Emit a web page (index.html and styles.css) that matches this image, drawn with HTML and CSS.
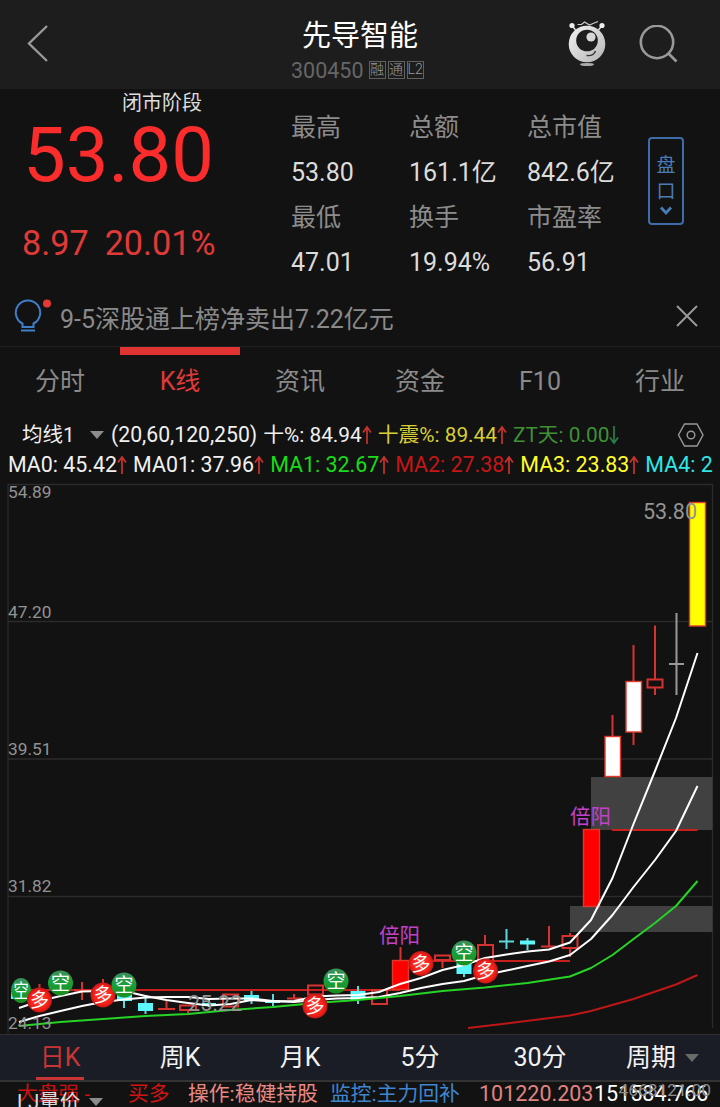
FILE: index.html
```
<!DOCTYPE html>
<html lang="zh-CN">
<head>
    <meta charset="UTF-8">
    <meta name="viewport" content="width=device-width, initial-scale=1.0">
    <title>先导智能 300450</title>
    <link rel="stylesheet" href="styles.css">
</head>
<body>
<header class="header">
    <svg class="back" width="24" height="40" viewBox="0 0 24 40">
        <path d="M21 3 3 20.500 21 38"/>
    </svg>
    <div class="stock">
        <h1>先导智能</h1>
        <div class="code">300450<span class="tag">融</span><span class="tag">通</span><span class="tag">L2</span></div>
    </div>
    <div class="tools">
        <!--机器人助手-->
        <svg class="robot" width="40" height="48" viewBox="0 0 40 48">
            <defs>
                <linearGradient id="robot-fill" x1="0" y1="0" x2="1" y2="1">
                    <stop offset="0" stop-color="#f4f4f4"/>
                    <stop offset="1" stop-color="#b4b4b4"/>
                </linearGradient>
            </defs>
            <path d="M5 5.500 8.500 10M35 5.500 31.500 10" stroke="#ddd" stroke-width="1.500"/>
            <circle cx="5" cy="5.500" r="2.600" fill="#eee"/>
            <circle cx="35" cy="5.500" r="2.600" fill="#eee"/>
            <path d="M10.500 4.500h4l3-2.500 5 3 3.500-1.500 5-2" fill="none" stroke="#ccc" stroke-width="1.200"/>
            <circle cx="20" cy="24" r="18.300" fill="url(#robot-fill)"/>
            <circle cx="20" cy="20.500" r="10.800" fill="#1d1d1d"/>
            <circle cx="24" cy="17" r="4.600" fill="#d6d6d6"/>
            <path d="M19.500 35.500q7 1 9-4.500" fill="none" stroke="#333" stroke-width="1.400"/>
            <ellipse cx="20" cy="44.500" rx="7" ry="1.600" fill="#aaa"/>
        </svg>
        <svg class="search" width="40" height="40" viewBox="0 0 40 40">
            <circle cx="18" cy="17" r="16.200"/>
            <path d="m29.500 28.500 8 8"/>
        </svg>
    </div>
</header>

<section class="quote">
    <div class="price-box">
        <div class="stage">闭市阶段</div>
        <div class="price">53.80</div>
        <div class="change"><span>8.97</span><span>20.01%</span></div>
    </div>
    <div class="detail">
        <span class="label">最高</span><span class="label">总额</span><span class="label">总市值</span>
        <span>53.80</span><span>161.1亿</span><span>842.6亿</span>
        <span class="label">最低</span><span class="label">换手</span><span class="label">市盈率</span>
        <span>47.01</span><span>19.94%</span><span>56.91</span>
    </div>
    <div class="handicap">
        <span>盘</span><span>口</span>
        <svg width="14" height="10" viewBox="0 0 14 10"><path d="m2 1.500 5 5.500 5-5.500"/></svg>
    </div>
</section>

<section class="news">
    <svg class="bulb" width="38" height="36" viewBox="0 0 38 36">
        <path d="M8.500 29v-3.500A12.200 12.200 0 1 1 19.500 25.500V29zM7 32.500h14"/>
        <circle cx="33" cy="5.500" r="4"/>
    </svg>
    <span class="news-text">9-5深股通上榜净卖出7.22亿元</span>
    <svg class="close" width="22" height="22" viewBox="0 0 22 22"><path d="m1 1 20 20M21 1 1 21"/></svg>
</section>

<nav class="tabs">
    <span>分时</span><span class="active">K线</span><span>资讯</span><span>资金</span><span>F10</span><span>行业</span>
</nav>

<section class="index">
    <div class="index-row">
        <span class="name">均线1</span><i class="down"></i>
        <span class="params">(20,60,120,250)</span>
        <span class="item">十%: 84.94<svg class="arrow"><use href="#arrow-up"/></svg></span>
        <span class="item dim-yellow">十震%: 89.44<svg class="arrow"><use href="#arrow-up"/></svg></span>
        <span class="item dim-green">ZT天: 0.00<svg class="arrow"><use href="#arrow-down"/></svg></span>
        <svg class="setting" width="28" height="24" viewBox="0 0 28 24">
            <path d="M7.500 1h12.500l6 11-6 11H7.500l-6-11z"/>
            <circle cx="14" cy="12" r="3.800"/>
        </svg>
    </div>
    <div class="index-row ma-row">
        <span class="item">MA0: 45.42<svg class="arrow"><use href="#arrow-up"/></svg></span>
        <span class="item">MA01: 37.96<svg class="arrow"><use href="#arrow-up"/></svg></span>
        <span class="item green">MA1: 32.67<svg class="arrow"><use href="#arrow-up"/></svg></span>
        <span class="item red">MA2: 27.38<svg class="arrow"><use href="#arrow-up"/></svg></span>
        <span class="item yellow">MA3: 23.83<svg class="arrow"><use href="#arrow-up"/></svg></span>
        <span class="item cyan">MA4: 2</span>
    </div>
</section>

<!--K线图，坐标原点在页面 y=480 处-->
<svg class="chart" width="720" height="554" viewBox="0 480 720 554">
    <defs>
        <symbol id="arrow-up" viewBox="0 0 10 20">
            <path d="M5 19V2M1 7.500 5 2l4 5.500" fill="none" stroke="#c8322e" stroke-width="1.700"/>
        </symbol>
        <symbol id="arrow-down" viewBox="0 0 10 20">
            <path d="M5 1v17M1 12.500 5 18l4-5.500" fill="none" stroke="#27804a" stroke-width="1.700"/>
        </symbol>
        <radialGradient id="ball-red" cx=".5" cy=".5" r=".5">
            <stop offset="0" stop-color="#ff4a3c"/>
            <stop offset=".8" stop-color="#f01c18"/>
            <stop offset="1" stop-color="#b81814"/>
        </radialGradient>
        <linearGradient id="ball-green" x1="0" y1="0" x2="0" y2="1">
            <stop offset="0" stop-color="#3c8f5c"/>
            <stop offset=".5" stop-color="#17a03a"/>
            <stop offset="1" stop-color="#1c8c1c"/>
        </linearGradient>
        <g id="long">
            <circle r="12.500" fill="url(#ball-red)"/>
            <text class="ball-text" y="7">多</text>
        </g>
        <g id="short">
            <circle r="12.500" fill="url(#ball-green)"/>
            <text class="ball-text" y="7">空</text>
        </g>
    </defs>

    <g class="grid">
        <path d="M8 1033V484.500H712.500V1028M8 621.500H712M8 759H712M8 896.500H712"/>
    </g>
    <g class="gap">
        <rect x="591" y="777" width="121.500" height="53"/>
        <rect x="570" y="906" width="142.500" height="26"/>
    </g>
    <g class="level">
        <path d="M19 990H400M400 961H570M612 830H697.500"/>
    </g>

    <g class="up">
        <path d="M39.500 984v6M82 982v18M74 990.500h16M103 979v8"/>
        <path d="M166.500 1001v9M158 1009h17M188 1010v3M180 1005.500h16v4.500h-16z"/>
        <path d="M223 994.500h15v12h-15zM287 998.500h15M294 994v4M308 985.500h15v9h-15zM372 990h15v14h-15z"/>
        <path d="M400.500 947v13M435 955.500h15v4.500h-15zM442.500 960v8M485 935v10M478 945h15v16h-15z"/>
        <path d="M549 926v20M541 946.500h15M570 933v3M570 948v9M562.500 936h15v12h-15z"/>
        <path d="M612.500 715v21M633.500 645v36M633.500 732v13M655 625.500v53M655 688v7M647.500 679.500h15v8h-15z"/>
    </g>
    <g class="down-candle">
        <path d="M124 996v12M145.500 995v19M209 999v8M251.500 991v13M273 994v12M358 986v18M464 960v17M506.500 929v20M499 941.500h15M527.500 938v12"/>
        <rect x="11" y="992" width="9" height="7"/>
        <rect x="117" y="992" width="15" height="9"/>
        <rect x="138" y="1003" width="15" height="8"/>
        <rect x="202" y="1003" width="14" height="3"/>
        <rect x="244" y="995" width="15" height="6"/>
        <rect x="265" y="1000" width="15" height="3"/>
        <rect x="350.500" y="991" width="15" height="9"/>
        <rect x="456.500" y="963" width="15" height="11"/>
        <rect x="520" y="940.500" width="15" height="4"/>
    </g>
    <g class="solid">
        <rect x="392.500" y="960.500" width="16" height="29"/>
        <rect x="583.500" y="829.500" width="16" height="77"/>
        <rect class="white" x="605" y="736.500" width="15.500" height="40"/>
        <rect class="white" x="626" y="681.500" width="15.500" height="50.500"/>
        <rect class="limit" x="689.500" y="502.500" width="16" height="123.500"/>
    </g>
    <path class="flat" d="M676.500 613v82M669 664h15"/>

    <g class="ma">
        <path d="M19 1008 39.500 1001 60.500 996 82 991.500 103 991 124 991 145.500 996 166.500 1000 188 1003 209 1005.500 230.500 1004 251.500 1000 273 1001.500 294 1001 315 996.500 336.500 995.500 358 995 379 992 400 984 421 978 442.500 970 464 965 485 958 506.500 954.500 527.500 951.500 549 949.500 570 942.500 591 920 612.500 878 633.500 824 655 771 676 718 697.500 653"/>
        <path d="M19 1022 39.500 1016 60.500 1011 82 1006 103 1002 124 999.500 145.500 997.500 166.500 997 188 997 209 999 230.500 998.500 251.500 998.500 273 1001 294 1002 315 1000 336.500 998.500 358 998 379 997 400 993 421 988 442.500 984 464 981 485 975 506.500 970.500 527.500 966 549 961.500 570 955 591 939 612.500 915 633.500 887 655 860 676 831 697.500 786"/>
        <path class="ma-green" d="M19 1026 60.500 1022 103 1019 145.500 1016 188 1014 230.500 1010 273 1007 315 1003 358 1000 400 996 442.500 991 485 987.500 527.500 983 570 976.500 591 968 612.500 955 633.500 939 655 923 676 906 697.500 881"/>
        <path class="ma-red" d="M468 1028 506.500 1023.500 570 1015.500 591 1011 633.500 999 676 984.500 697.500 975"/>
    </g>

    <use href="#short" transform="translate(21 990.500) scale(.8 1)"/>
    <use href="#long" x="39.500" y="1000"/>
    <use href="#short" x="60.500" y="983"/>
    <use href="#long" x="103" y="995"/>
    <use href="#short" x="124" y="985"/>
    <use href="#long" x="315" y="1006"/>
    <use href="#short" x="336" y="981"/>
    <use href="#long" x="421" y="963.500"/>
    <use href="#short" x="464" y="953"/>
    <use href="#long" x="485.500" y="971"/>

    <g class="axis">
        <text x="8" y="498">54.89</text>
        <text x="8" y="618">47.20</text>
        <text x="8" y="755">39.51</text>
        <text x="8" y="892">31.82</text>
        <text x="8" y="1029">24.13</text>
    </g>
    <g class="extreme">
        <text x="643" y="519">53.80</text>
        <text x="188" y="1011">25.22</text>
    </g>
    <g class="mark">
        <text x="379" y="943">倍阳</text>
        <text x="570" y="824">倍阳</text>
    </g>
</svg>

<nav class="period">
    <span class="active">日K</span><span>周K</span><span>月K</span><span>5分</span><span>30分</span><span class="more">周期<i class="down"></i></span>
</nav>

<section class="volume">
    <div class="signals">
        <span class="trend">大盘强 -</span>
        <span class="buy">买多</span>
        <span class="advice">操作:稳健持股</span>
        <span class="monitor">监控:主力回补</span>
        <span class="num">101220.203</span><span class="num-white">151584.766</span>
    </div>
    <div class="volume-name">LJ量价<i class="down"></i></div>
    <div class="volume-max">4668121.00</div>
</section>
</body>
</html>
```

FILE: styles.css
```
* {
    margin: 0;
    padding: 0;
    box-sizing: border-box;
}

body {
    width: 720px;
    height: 1107px;
    overflow: hidden;
    background: #121212;
    color: #dcdcdc;
    font-family: Roboto, "Noto Sans CJK SC", sans-serif;
    font-weight: 400;
}

svg {
    display: block;
    fill: none;
}

/*顶部标题*/
.header {
    display: grid;
    grid-template-columns: 200px 320px 200px;
    height: 89px;
    background: #1d1d1d;
}

.back {
    margin: 23px 0 0 26px;
    stroke: #999;
    stroke-width: 2.4;
}

.stock {
    text-align: center;
}

h1 {
    padding-top: 15px;
    height: 56px;
    line-height: 42px;
    color: #fff;
    font-size: 29px;
    font-weight: 400;
}

.code {
    display: flex;
    align-items: center;
    margin-left: 91px;
    height: 28px;
    color: #666;
    font-size: 21.5px;
}

.tag {
    margin-left: 2px;
    width: 17px;
    height: 18px;
    border: 1px solid #606060;
    line-height: 15px;
    color: #999;
    font-size: 14px;
    font-weight: 300;
}

.tag:first-child {
    margin-left: 5px;
}

.tools {
    display: flex;
    padding: 20px 0 0 47px;
}

.search {
    margin: 5px 0 0 32px;
    stroke: #999;
    stroke-width: 2.6;
}

/*行情*/
.quote {
    display: flex;
    height: 197px;
}

.price-box {
    width: 291px;
}

.stage {
    margin-left: 122px;
    height: 27px;
    line-height: 29px;
    font-size: 20px;
}

.price {
    margin-left: 23px;
    height: 78px;
    line-height: 79px;
    color: #fb2c2c;
    font-size: 76px;
}

.change {
    display: flex;
    gap: 16px;
    margin: 28px 0 0 22px;
    line-height: 42px;
    color: #e03a38;
    font-size: 34.2px;
}

.detail {
    display: grid;
    grid-template-columns: 118px 118px 121px;
    grid-auto-rows: 45px;
    padding-top: 16px;
    line-height: 45px;
    font-size: 25px;
}

.label {
    color: #8c8c8c;
}

.handicap {
    display: flex;
    flex-direction: column;
    align-items: center;
    margin-top: 48px;
    padding-top: 14px;
    width: 36px;
    height: 88px;
    border: 2px solid #3d6ca6;
    border-radius: 4px;
    line-height: 26px;
    color: #4a7cb8;
    font-size: 19px;
}

.handicap svg {
    margin-top: 1px;
    stroke: #4a7cb8;
    stroke-width: 2.8;
}

/*消息条*/
.news {
    display: flex;
    align-items: center;
    height: 61px;
    padding: 0 22px 0 14px;
    border-bottom: 1px solid #1f1f1f;
}

.bulb {
    margin-right: 8px;
    stroke: #3f7fca;
    stroke-width: 2;
}

.bulb circle {
    fill: #e53935;
    stroke: none;
}

.news-text {
    flex: 1;
    padding-top: 7px;
    line-height: 36px;
    color: #8a8a8a;
    font-size: 25px;
}

.close {
    stroke: #999;
    stroke-width: 2;
}

/*选项卡*/
.tabs {
    display: grid;
    grid-template-columns: repeat(6, 120px);
    height: 68px;
}

.tabs span {
    border-top: 8px solid transparent;
    line-height: 54px;
    text-align: center;
    color: #8a8a8a;
    font-size: 25px;
}

.tabs .active {
    border-color: #e03332;
    color: #e03a38;
}

/*均线指标*/
.index {
    height: 65px;
    padding-top: 5px;
    color: #f0f0f0;
    font-size: 20.8px;
}

.index-row {
    display: flex;
    align-items: center;
    height: 30px;
    line-height: 26px;
    white-space: nowrap;
}

.name {
    margin-left: 22px;
    width: 68px;
    font-size: 20.5px;
}

.down {
    flex: none;
    width: 0;
    height: 0;
    border: 7px solid transparent;
    border-top: 8px solid #8c8c8c;
    border-bottom: 0;
}

.params {
    margin: 0 6px 0 7px;
    font-size: 21.2px;
}

.item {
    display: flex;
    align-items: center;
    height: 26px;
    white-space: pre;
}

.arrow {
    margin-right: 6px;
    width: 10px;
    height: 20px;
}

.setting {
    margin-left: auto;
    margin-right: 15px;
    stroke: #999;
    stroke-width: 1.4;
}

.ma-row {
    padding-left: 8px;
    font-size: 21.4px;
}

.dim-yellow {
    color: #d8cf35;
}

.dim-green {
    color: #3f9136;
}

.green {
    color: #18dc18;
}

.red {
    color: #c41616;
}

.yellow {
    color: #ffff28;
}

.cyan {
    color: #2fe6e6;
}

/*K线图*/
.grid {
    stroke: #2b2b2b;
    stroke-width: 1.3;
}

.gap {
    fill: #414141;
}

.level {
    stroke: #c9201e;
    stroke-width: 2;
}

.up {
    stroke: #d83230;
    stroke-width: 2;
}

.down-candle {
    fill: #5cf6fb;
}

.down-candle path {
    stroke: #5cd8dc;
    stroke-width: 2;
}

.solid {
    fill: #f00;
    stroke: #e0392b;
    stroke-width: 1.4;
}

.white {
    fill: #fff;
}

.limit {
    fill: #ff0;
}

.flat {
    stroke: #999;
    stroke-width: 2;
}

.ma {
    stroke: #fff;
    stroke-width: 2;
    stroke-linejoin: round;
}

.ma-green {
    stroke: #26d326;
}

.ma-red {
    stroke: #bd1717;
}

.ball-text {
    fill: #fff;
    font-size: 19px;
    text-anchor: middle;
}

.axis {
    fill: #929292;
    font-size: 17.3px;
}

.extreme {
    fill: #949494;
    font-size: 21.5px;
}

.mark {
    fill: #c142c9;
    font-size: 20.5px;
}

/*周期切换*/
.period {
    display: grid;
    grid-template-columns: repeat(6, 120px);
    height: 48px;
    border-top: 1px solid #303030;
    border-bottom: 2px solid #333;
    background: #1a1d25;
    color: #f2f2f2;
    font-size: 25px;
}

.period span {
    height: 45px;
    line-height: 46px;
    text-align: center;
}

.period .active {
    margin: 0 36px;
    height: 45px;
    border-bottom: 3px solid #c93535;
    color: #c93535;
}

.period .more {
    display: flex;
    align-items: center;
    gap: 9px;
    padding-left: 26px;
    line-height: 44px;
}

.more .down {
    border-top-color: #6a6a6a;
}

/*成交量*/
.volume {
    position: relative;
    height: 25px;
    overflow: hidden;
}

.signals {
    display: flex;
    padding-left: 17px;
    line-height: 24px;
    font-size: 20.8px;
    white-space: nowrap;
}

.trend {
    width: 111px;
    color: #c81212;
}

.buy {
    width: 60px;
    color: #d01414;
}

.advice {
    width: 142px;
    color: #e88a84;
}

.monitor {
    width: 149px;
    color: #3f86d0;
}

.num {
    width: 115px;
    color: #e08480;
    font-size: 21.5px;
}

.num-white {
    color: #fff;
    font-size: 21.5px;
}

.volume-name {
    display: flex;
    align-items: center;
    gap: 9px;
    position: absolute;
    left: 17px;
    top: 7px;
    line-height: 26px;
    font-size: 20.5px;
}

.volume-max {
    position: absolute;
    right: 9px;
    top: 0;
    line-height: 16px;
    color: #8c8c8c;
    font-size: 17.4px;
}
```
